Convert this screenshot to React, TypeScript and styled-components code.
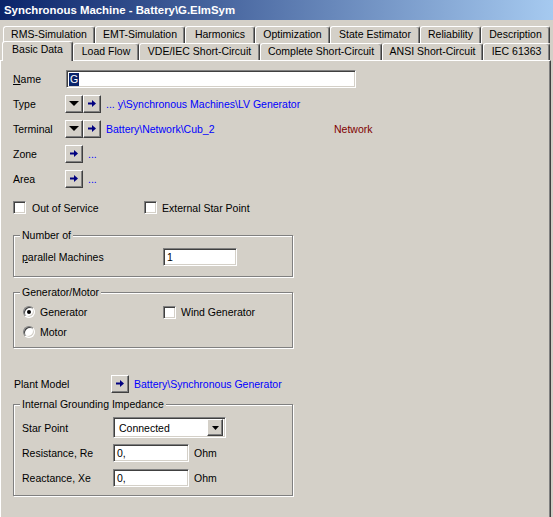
import React from 'react';
import styled, { createGlobalStyle, css } from 'styled-components';

const Global = createGlobalStyle`
  html, body { margin: 0; padding: 0; background: #d4d0c8; }
  body {
    font-family: "Liberation Sans", Arial, sans-serif;
    font-size: 10.5px;
    color: #000;
  }
  * { box-sizing: border-box; }
`;

const raised = css`
  background: #d4d0c8;
  border: 1px solid;
  border-color: #fff #404040 #404040 #fff;
  box-shadow: inset -1px -1px #808080, inset 1px 1px #d4d0c8;
`;

const sunken = css`
  background: #fff;
  border: 1px solid;
  border-color: #808080 #fff #fff #808080;
  box-shadow: inset 1px 1px #404040, inset -1px -1px #d4d0c8;
`;

const Window = styled.div`
  width: 553px;
  height: 517px;
  background: #d4d0c8;
  overflow: hidden;
  display: flex;
  flex-direction: column;
`;

const TitleBar = styled.div`
  flex: none;
  height: 20px;
  background: linear-gradient(to right, #0a246a, #a6caf0);
  color: #fff;
  font-weight: bold;
  font-size: 11.4px;
  display: flex;
  align-items: center;
  padding-left: 4px;
  white-space: nowrap;
`;

const TabRow = styled.div<{ $front?: boolean }>`
  flex: none;
  display: flex;
  align-items: flex-start;
  height: ${p => (p.$front ? 19 : 17)}px;
  margin-top: ${p => (p.$front ? -2 : 6)}px;
  margin-left: ${p => (p.$front ? 2 : 3)}px;
  position: relative;
  z-index: ${p => (p.$front ? 2 : 1)};
`;

const Tab = styled.div<{ $w: number; $active?: boolean; $front?: boolean }>`
  flex: none;
  width: ${p => p.$w}px;
  height: ${p => (p.$active ? 20 : 17)}px;
  margin-top: ${p => (p.$front && !p.$active ? 2 : 0)}px;
  position: relative;
  z-index: ${p => (p.$active ? 3 : 1)};
  background: #d4d0c8;
  border: 1px solid;
  border-bottom: none;
  border-color: #fff #404040 transparent #fff;
  box-shadow: inset -1px 0 #808080;
  border-radius: 3px 3px 0 0;
  text-align: center;
  line-height: 13px;
  padding-top: 1px;
  white-space: nowrap;
`;

const Panel = styled.div`
  flex: 1;
  width: 551px;
  border-top: 1px solid #fff;
  border-left: 1px solid #fff;
  border-right: 1px solid #404040;
  box-shadow: inset -1px 0 #808080;
  padding: 6px 0 0 12px;
  display: flex;
  flex-direction: column;
  align-items: flex-start;
`;

const Row = styled.div<{ $h?: number; $mt?: number }>`
  display: flex;
  align-items: center;
  height: ${p => p.$h ?? 25}px;
  margin-top: ${p => p.$mt ?? 0}px;
  white-space: nowrap;
`;

const Label = styled.span<{ $w: number; $ml?: number }>`
  flex: none;
  width: ${p => p.$w}px;
  margin-left: ${p => p.$ml ?? 0}px;
`;

const TextBox = styled.div<{ $w: number; $h?: number; $ml?: number }>`
  ${sunken};
  flex: none;
  width: ${p => p.$w}px;
  height: ${p => p.$h ?? 18}px;
  margin-left: ${p => p.$ml ?? 0}px;
  padding: 1px 3px;
  line-height: 14px;
  display: flex;
  align-items: center;
`;

const Selected = styled.span`
  background: #0a246a;
  color: #fff;
  padding: 0 1px;
  margin-left: -1px;
  line-height: 13px;
`;

const IconButton = styled.div<{ $w?: number; $h?: number }>`
  ${raised};
  flex: none;
  width: ${p => p.$w ?? 18}px;
  height: ${p => p.$h ?? 18}px;
  display: flex;
  align-items: center;
  justify-content: center;
`;

const Link = styled.span<{ $w?: number; $ml?: number }>`
  color: #0000ff;
  margin-left: ${p => p.$ml ?? 5}px;
  ${p => (p.$w ? `width: ${p.$w}px; flex: none;` : '')}
`;

const DarkRed = styled.span`
  color: #800000;
`;

const CheckItem = styled.div<{ $w?: number }>`
  display: flex;
  align-items: center;
  ${p => (p.$w ? `width: ${p.$w}px; flex: none;` : '')}
`;

const CheckBox = styled.span<{ $gap?: number }>`
  ${sunken};
  flex: none;
  width: 13px;
  height: 13px;
  margin-right: ${p => p.$gap ?? 6}px;
`;

const Radio = styled.span<{ $checked?: boolean }>`
  flex: none;
  width: 12px;
  height: 12px;
  margin-right: 5px;
  border-radius: 50%;
  background: #fff;
  border: 1px solid;
  border-color: #808080 #fff #fff #808080;
  box-shadow: inset 1px 1px #404040, inset -1px -1px #d4d0c8;
  display: flex;
  align-items: center;
  justify-content: center;
  &::after {
    content: '';
    width: 4px;
    height: 4px;
    border-radius: 50%;
    background: ${p => (p.$checked ? '#000' : 'transparent')};
  }
`;

const Group = styled.div<{ $h: number; $mt: number; $pt: number; $pl?: number }>`
  position: relative;
  width: 280px;
  height: ${p => p.$h}px;
  margin-top: ${p => p.$mt}px;
  padding-top: ${p => p.$pt}px;
  padding-left: ${p => p.$pl ?? 8}px;
  border: 1px solid #808080;
  box-shadow: inset 1px 1px #fff, 1px 1px #fff;
  display: flex;
  flex-direction: column;
`;

const Legend = styled.span`
  position: absolute;
  top: -7px;
  left: 6px;
  padding: 0 2px;
  line-height: 13px;
  background: #d4d0c8;
  white-space: nowrap;
`;

const Combo = styled.div`
  ${sunken};
  flex: none;
  width: 113px;
  height: 21px;
  padding: 2px 2px 2px 5px;
  display: flex;
  align-items: center;
  justify-content: space-between;
`;

const DropArrow = ({ w = 10, h = 5 }: { w?: number; h?: number }) => (
  <svg width={w} height={h} viewBox={`0 0 ${w} ${h}`}>
    <polygon points={`0,0 ${w},0 ${w / 2},${h}`} fill="#000" />
  </svg>
);

const GoArrow = () => (
  <svg width="8" height="7" viewBox="0 0 8 7">
    <rect x="0" y="2.5" width="4" height="2" fill="#000080" />
    <polygon points="4,0 8,3.5 4,7" fill="#000080" />
  </svg>
);

const backTabs: [string, number][] = [
  ['RMS-Simulation', 92],
  ['EMT-Simulation', 90],
  ['Harmonics', 70],
  ['Optimization', 75],
  ['State Estimator', 90],
  ['Reliability', 61],
  ['Description', 69],
];

const frontTabs: [string, number][] = [
  ['Basic Data', 71],
  ['Load Flow', 66],
  ['VDE/IEC Short-Circuit', 121],
  ['Complete Short-Circuit', 122],
  ['ANSI Short-Circuit', 101],
  ['IEC 61363', 67],
];

export default function App() {
  return (
    <>
      <Global />
      <Window>
        <TitleBar>Synchronous Machine - Battery\G.ElmSym</TitleBar>
        <TabRow>
          {backTabs.map(([t, w]) => (
            <Tab key={t} $w={w}>{t}</Tab>
          ))}
        </TabRow>
        <TabRow $front>
          {frontTabs.map(([t, w], i) => (
            <Tab key={t} $w={w} $front $active={i === 0}>{t}</Tab>
          ))}
        </TabRow>
        <Panel>
          <Row $h={24}>
            <Label $w={53}><u>N</u>ame</Label>
            <TextBox $w={290}><Selected>G</Selected></TextBox>
          </Row>
          <Row>
            <Label $w={52}>Type</Label>
            <IconButton><DropArrow /></IconButton>
            <IconButton><GoArrow /></IconButton>
            <Link>... y\Synchronous Machines\LV Generator</Link>
          </Row>
          <Row>
            <Label $w={52}>Terminal</Label>
            <IconButton><DropArrow /></IconButton>
            <IconButton><GoArrow /></IconButton>
            <Link $w={228}>Battery\Network\Cub_2</Link>
            <DarkRed>Network</DarkRed>
          </Row>
          <Row>
            <Label $w={52}>Zone</Label>
            <IconButton><GoArrow /></IconButton>
            <Link>...</Link>
          </Row>
          <Row>
            <Label $w={52}>Area</Label>
            <IconButton><GoArrow /></IconButton>
            <Link>...</Link>
          </Row>
          <Row $mt={4}>
            <CheckItem $w={131}><CheckBox />Out of Service</CheckItem>
            <CheckItem><CheckBox $gap={5} />External Star Point</CheckItem>
          </Row>

          <Group $h={42} $mt={15} $pt={12}>
            <Legend>Number of</Legend>
            <Row $h={18}>
              <Label $w={141}><u>p</u>arallel Machines</Label>
              <TextBox $w={74}>1</TextBox>
            </Row>
          </Group>

          <Group $h={56} $mt={15} $pt={9} $pl={9}>
            <Legend>Generator/Motor</Legend>
            <Row $h={20}>
              <CheckItem $w={140}><Radio $checked />Generator</CheckItem>
              <CheckItem><CheckBox $gap={5} />Wind Generator</CheckItem>
            </Row>
            <Row $h={20}>
              <CheckItem><Radio />Motor</CheckItem>
            </Row>
          </Group>

          <Row $mt={23}>
            <Label $w={97} $ml={1}>Plant Model</Label>
            <IconButton><GoArrow /></IconButton>
            <Link>Battery\Synchronous Generator</Link>
          </Row>

          <Group $h={92} $mt={8} $pt={10}>
            <Legend>Internal Grounding Impedance</Legend>
            <Row>
              <Label $w={91}>Star Point</Label>
              <Combo>
                <span>Connected</span>
                <IconButton $w={16} $h={17}><DropArrow w={7} h={4} /></IconButton>
              </Combo>
            </Row>
            <Row>
              <Label $w={91}>Resistance, Re</Label>
              <TextBox $w={76}>0,</TextBox>
              <Label $w={40} $ml={5}>Ohm</Label>
            </Row>
            <Row>
              <Label $w={91}>Reactance, Xe</Label>
              <TextBox $w={76}>0,</TextBox>
              <Label $w={40} $ml={5}>Ohm</Label>
            </Row>
          </Group>
        </Panel>
      </Window>
    </>
  );
}
